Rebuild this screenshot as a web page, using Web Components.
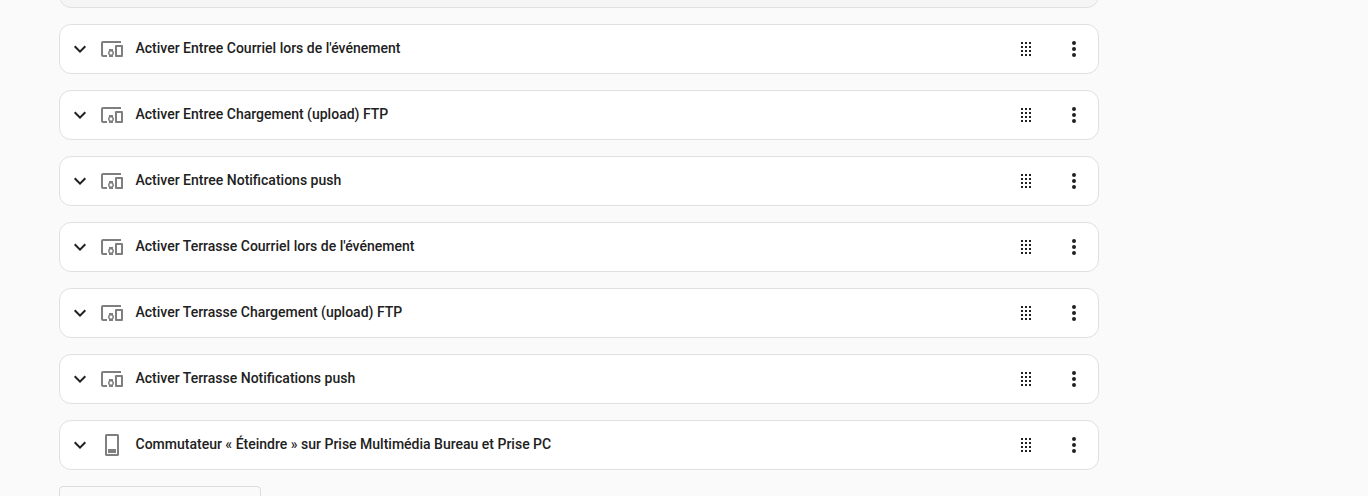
<!DOCTYPE html>
<html lang="fr">
<head>
<meta charset="utf-8">
<title>Actions</title>
<style>
html, body { margin: 0; height: 100%; overflow: hidden; background: #fafafa; }
body { font-family: Roboto, "Liberation Sans", sans-serif; color: #212121; }
</style>
</head>
<body>
<action-list>
  <action-row icon="devices" label="Activer Entree Courriel lors de l'événement"></action-row>
  <action-row icon="devices" label="Activer Entree Chargement (upload) FTP"></action-row>
  <action-row icon="devices" label="Activer Entree Notifications push"></action-row>
  <action-row icon="devices" label="Activer Terrasse Courriel lors de l'événement"></action-row>
  <action-row icon="devices" label="Activer Terrasse Chargement (upload) FTP"></action-row>
  <action-row icon="devices" label="Activer Terrasse Notifications push"></action-row>
  <action-row icon="switch" label="Commutateur « Éteindre » sur Prise Multimédia Bureau et Prise PC"></action-row>
</action-list>
<script>
const ICONS = {
  chevron: 'M7.41 8.58 12 13.17l4.59-4.59L18 10l-6 6-6-6z',
  devices: 'M3 6h18V4H3c-1.1 0-2 .9-2 2v12c0 1.1.9 2 2 2h4v-2H3V6m10 6H9v1.78c-.61.55-1 1.33-1 2.22s.39 1.67 1 2.22V20h4v-1.78c.61-.55 1-1.34 1-2.22s-.39-1.67-1-2.22V12m-2 5.5c-.83 0-1.5-.67-1.5-1.5s.67-1.5 1.5-1.5 1.5.67 1.5 1.5-.67 1.5-1.5 1.5M22 8h-6c-.5 0-1 .5-1 1v10c0 .5.5 1 1 1h6c.5 0 1-.5 1-1V9c0-.5-.5-1-1-1m-1 10h-4v-8h4v8z',
  switch: 'M6.5 1h11A1.5 1.5 0 0 1 19 2.500v19a1.500 1.500 0 0 1-1.500 1.500h-11A1.500 1.500 0 0 1 5 21.500v-19A1.500 1.500 0 0 1 6.500 1M7 3v18h10V3H7m1 13h8v4H8v-4z',
  drag: 'M7 19v-2h2v2H7m4 0v-2h2v2h-2m4 0v-2h2v2h-2m-8-4v-2h2v2H7m4 0v-2h2v2h-2m4 0v-2h2v2h-2m-8-4V9h2v2H7m4 0V9h2v2h-2m4 0V9h2v2h-2M7 7V5h2v2H7m4 0V5h2v2h-2m4 0V5h2v2h-2z',
  dots: 'M12 16a2 2 0 0 1 2 2 2 2 0 0 1-2 2 2 2 0 0 1-2-2 2 2 0 0 1 2-2m0-6a2 2 0 0 1 2 2 2 2 0 0 1-2 2 2 2 0 0 1-2-2 2 2 0 0 1 2-2m0-6a2 2 0 0 1 2 2 2 2 0 0 1-2 2 2 2 0 0 1-2-2 2 2 0 0 1 2-2z'
};

customElements.define('svg-icon', class extends HTMLElement {
  connectedCallback() {
    if (this.shadowRoot) return;
    this.attachShadow({ mode: 'open' }).innerHTML = `
      <style>
        :host { display: block; flex: none; width: 24px; height: 24px; }
        svg { display: block; fill: currentColor; fill-rule: evenodd; }
      </style>
      <svg width="24" height="24" viewBox="0 0 24 24"><path d="${ICONS[this.getAttribute('name')]}"/></svg>`;
  }
});

customElements.define('outlined-card', class extends HTMLElement {
  constructor() {
    super();
    this.attachShadow({ mode: 'open' }).innerHTML = `
      <style>
        :host { display: block; box-sizing: border-box; height: 50px; border: 1px solid #e0e0e0; border-radius: 12px; background: #fff; }
      </style>
      <slot></slot>`;
  }
});

customElements.define('action-row', class extends HTMLElement {
  connectedCallback() {
    if (this.shadowRoot) return;
    this.attachShadow({ mode: 'open' }).innerHTML = `
      <style>
        :host { display: block; }
        .row { display: flex; align-items: center; height: 48px; padding: 0 12px 0 8px; }
        .type { margin-left: 8px; color: #7f7f7f; }
        h3 { flex: 1; margin: 0 0 2px 11.5px; font-size: 14px; font-weight: 500; line-height: 20px; white-space: nowrap; }
        .menu { margin-left: 24px; }
      </style>
      <outlined-card><div class="row">
        <svg-icon name="chevron"></svg-icon>
        <svg-icon class="type" name="${this.getAttribute('icon')}"></svg-icon>
        <h3></h3>
        <svg-icon name="drag"></svg-icon>
        <svg-icon class="menu" name="dots"></svg-icon>
      </div></outlined-card>`;
    this.shadowRoot.querySelector('h3').textContent = this.getAttribute('label');
  }
});

customElements.define('action-list', class extends HTMLElement {
  constructor() {
    super();
    this.attachShadow({ mode: 'open' }).innerHTML = `
      <style>
        :host { display: flex; flex-direction: column; gap: 16px; width: 1040px; margin-left: 59px; height: 496px; overflow: hidden; }
        outlined-card { flex: none; }
        .previous { margin-top: -42px; background: #f5f5f5; }
        .add { box-sizing: border-box; flex: none; width: 202px; height: 40px; border: 1px solid #dcdcdc; border-radius: 4px; }
      </style>
      <outlined-card class="previous"></outlined-card>
      <slot></slot>
      <div class="add"></div>`;
  }
});
</script>
</body>
</html>
